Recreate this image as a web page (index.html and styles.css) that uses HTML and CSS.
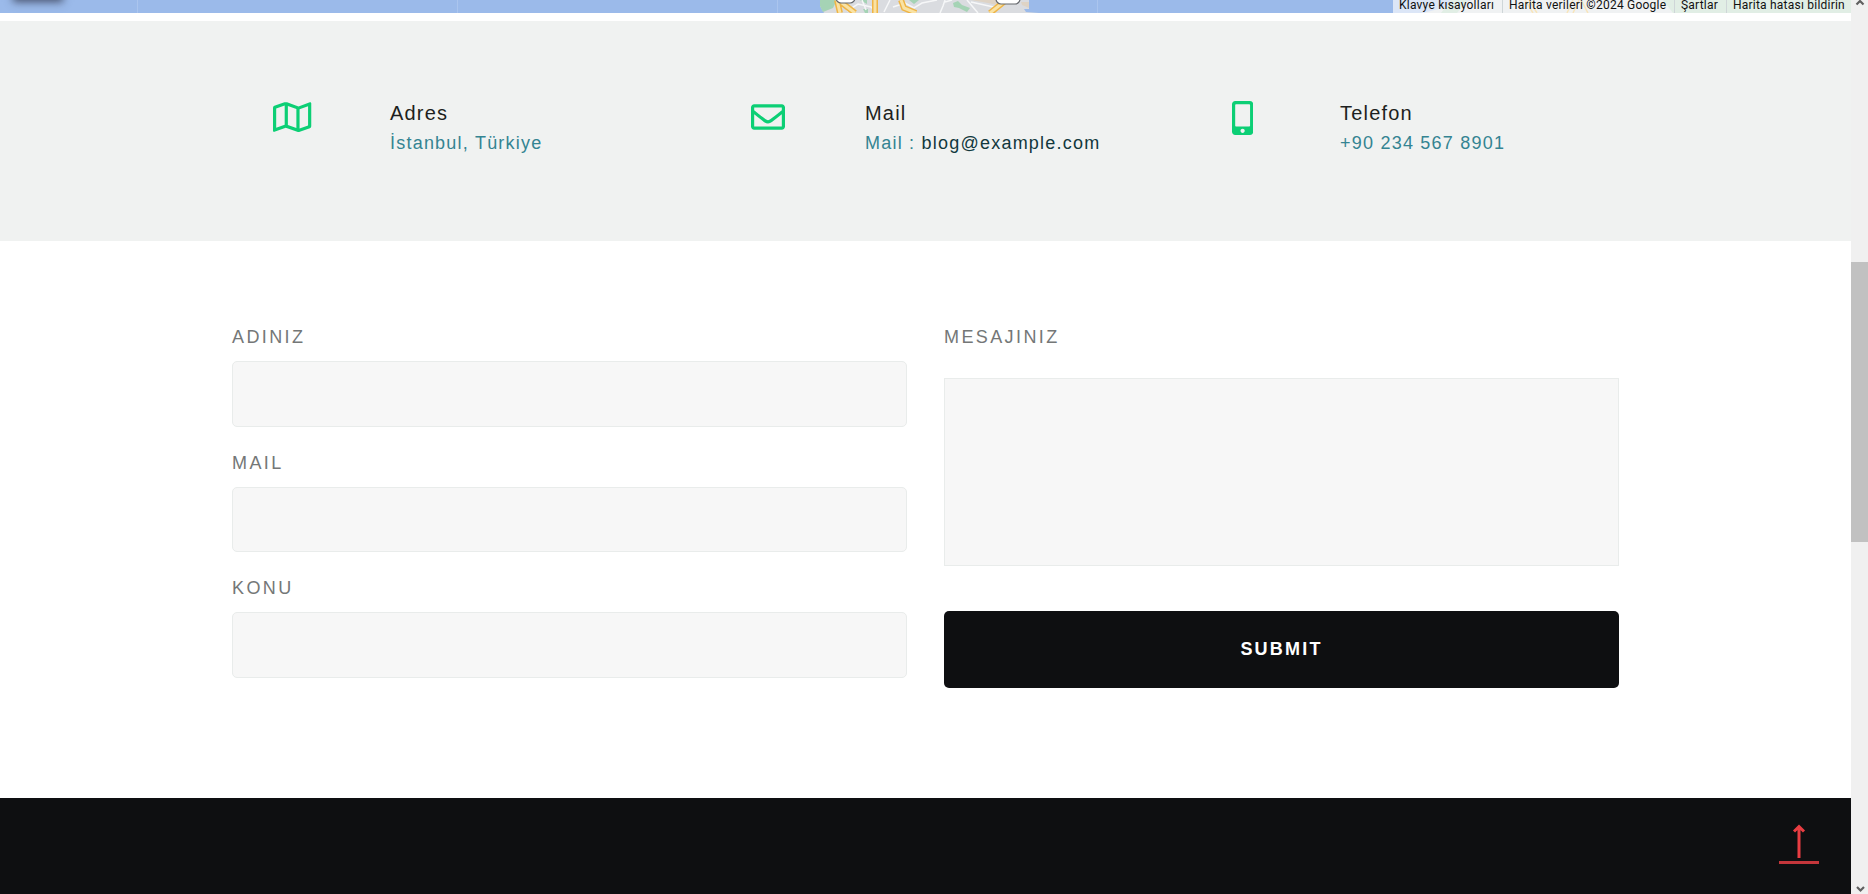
FILE: index.html
```html
<!DOCTYPE html>
<html lang="tr">
<head>
<meta charset="utf-8">
<title>İletişim</title>
<link rel="stylesheet" href="styles.css">
</head>
<body>
<div class="page">
  <section class="map">
    <svg class="map-art" width="1851" height="13" viewBox="0 0 1851 13">
      <path class="tile" d="M137.5 0V13M457.500 0V13M777.500 0V13M1097.500 0V13"/>
      <path class="land" d="M820 0H1029V9L1024 9 1026 12 1039 13H824L820 6Z"/>
      <path class="park" d="M820 0H837L833 8 823 12 820 6ZM909 0H919L914 4ZM953 3L958 1 962 5 970 8 967 12 959 8 954 7ZM860 0H867V4ZM863 9H868V13H865Z"/>
      <path class="sand" d="M971 0H997V5L988 3ZM1021 2H1029V8L1022 5Z"/>
      <path class="street" d="M847 11L858 4 871 7 876 12M884 12L890 0M893 7L905 3 914 8 922 3 937 0M945 0L943 6 940 13M945 2L952 0M967 0L978 13M971 2L998 8M862 0L866 10"/>
      <path class="road" d="M837 0L840 13M842 3L855 13M875 0V13M901 0L904 8 916 13M1005 1L990 13"/>
      <path class="road-core" d="M837 0L840 13M842 3L855 13M875 0V13M901 0L904 8 916 13M1005 1L990 13"/>
      <rect class="shield" x="836" y="-10" width="19" height="13" rx="5"/>
      <rect class="shield" x="996" y="-10" width="24" height="14" rx="5"/>
    </svg>
    <span class="map-card"></span>
    <div class="credits">
      <svg class="credits-art" width="458" height="13" viewBox="0 0 458 13">
        <path class="tint" d="M0 0H80L30 13H0Z"/>
        <path class="tint-park" d="M48 13L58 0H75L64 13ZM270 0H458V13H280Z"/>
        <path class="tint-road" d="M132 0L140 13M136 0L144 13M180 0L174 13M186 0L180 13M188 0L195 13"/>
      </svg>
      <span>Klavye kısayolları</span><span>Harita verileri ©2024 Google</span><span>Şartlar</span><span>Harita hatası bildirin</span>
    </div>
  </section>

  <section class="info">
    <div class="info-item">
      <div class="info-icon raised"><svg width="38.250" height="34" viewBox="0 0 576 512"><path d="M560.02 32c-1.96 0-3.98.37-5.96 1.16L384.01 96H384L212 35.28A64.252 64.252 0 0 0 191.76 32c-6.69 0-13.37 1.05-19.81 3.14L20.12 87.95A32.006 32.006 0 0 0 0 117.66v346.32C0 473.17 7.53 480 15.99 480c1.96 0 3.97-.37 5.96-1.16L192 416l172 60.71a63.98 63.98 0 0 0 40.05.15l151.83-52.81A31.996 31.996 0 0 0 576 394.34V48.02c0-9.19-7.53-16.02-15.98-16.02zM224 90.42l128 45.19v285.97l-128-45.19V90.42zM48 418.05V129.07l128-44.53v286.2l-.64.23L48 418.05zm480-35.13l-128 44.53V141.26l.64-.24L528 93.95v288.97z"/></svg></div>
      <div><h3>Adres</h3><p>İstanbul, Türkiye</p></div>
    </div>
    <div class="info-item">
      <div class="info-icon raised"><svg width="34" height="34" viewBox="0 0 512 512"><path d="M464 64H48C21.490 64 0 85.490 0 112v288c0 26.510 21.490 48 48 48h416c26.510 0 48-21.490 48-48V112c0-26.510-21.490-48-48-48zm0 48v40.805c-22.422 18.259-58.168 46.651-134.587 106.490-16.841 13.247-50.201 45.072-73.413 44.701-23.208.375-56.579-31.459-73.413-44.701C106.180 199.465 70.425 171.067 48 152.805V112h416zM48 400V214.398c22.914 18.251 55.409 43.862 104.938 82.646 21.857 17.205 60.134 55.186 103.062 54.955 42.717.231 80.509-37.199 103.053-54.947 49.528-38.783 82.032-64.401 104.947-82.653V400H48z"/></svg></div>
      <div><h3>Mail</h3><p>Mail : <a>blog@example.com</a></p></div>
    </div>
    <div class="info-item">
      <div class="info-icon"><svg width="21.250" height="34" viewBox="0 0 320 512"><path d="M272 0H48C21.500 0 0 21.500 0 48v416c0 26.500 21.500 48 48 48h224c26.500 0 48-21.500 48-48V48c0-26.500-21.500-48-48-48zM160 480c-17.700 0-32-14.300-32-32s14.300-32 32-32 32 14.300 32 32-14.300 32-32 32zm112-108c0 6.600-5.400 12-12 12H60c-6.600 0-12-5.400-12-12V60c0-6.600 5.400-12 12-12h200c6.600 0 12 5.400 12 12v312z"/></svg></div>
      <div><h3>Telefon</h3><p>+90 234 567 8901</p></div>
    </div>
  </section>

  <form class="contact">
    <div class="column">
      <label for="name">ADINIZ</label><input id="name" type="text">
      <label for="mail">MAIL</label><input id="mail" type="text">
      <label for="subject">KONU</label><input id="subject" type="text">
    </div>
    <div class="column">
      <label for="message">MESAJINIZ</label><textarea id="message"></textarea>
      <button type="button">SUBMIT</button>
    </div>
  </form>

  <footer class="footer">
    <svg class="to-top" width="42" height="42" viewBox="0 0 42 42"><path d="M21 34V3M16 7.500L21 2.500 26 7.500"/><path class="base" d="M1 38.500H41"/></svg>
  </footer>
</div>
<div class="scrollbar">
  <svg width="17" height="17" viewBox="0 0 17 17"><path d="M5.500 4.500L9 1 12.500 4.500"/></svg>
  <div class="thumb"></div>
  <svg width="17" height="17" viewBox="0 0 17 17"><path d="M6 10L9.500 13.500 13 10"/></svg>
</div>
</body>
</html>
```

FILE: styles.css
```css
* { box-sizing: border-box; }

body {
  margin: 0;
  height: 894px;
  display: flex;
  overflow: hidden;
  background: #fff;
  font-family: "Liberation Sans", Arial, sans-serif;
}

.page { width: 1851px; height: 894px; display: flex; flex-direction: column; }

.map {
  position: relative;
  height: 13px;
  margin-bottom: 8px;
  overflow: hidden;
  background: #9bbaea;
}
.map-art { display: block; }
.map-art path { fill: none; }
.map-art .tile { stroke: #abc5ee; }
.map-art .land { fill: #dadce0; }
.map-art .park { fill: #a5d3b5; }
.map-art .sand { fill: #ded3c5; }
.map-art .street { stroke: #f6f7f8; stroke-width: 1.500px; }
.map-art .road { stroke: #efb546; stroke-width: 6px; }
.map-art .road-core { stroke: #f9e2a4; stroke-width: 3px; }
.map-art .shield { fill: #fff; stroke: #65686d; stroke-width: 1.200px; }
.map-card {
  position: absolute;
  left: 14px;
  top: -38px;
  width: 48px;
  height: 38px;
  box-shadow: 0 1px 8px 1px rgba(45, 50, 70, .75);
}
.credits {
  position: absolute;
  top: 0;
  right: 0;
  width: 458px;
  height: 13px;
  background: #f0f2f3;
  color: #111;
  font: 12px/11px Roboto, sans-serif;
  letter-spacing: .22px;
  display: grid;
  grid-template-columns: 109px 172px 52px 1fr;
}
.credits-art { position: absolute; left: 0; top: 0; }
.credits .tint { fill: #dce6f7; }
.credits .tint-park { fill: #e1eee5; }
.credits .tint-road { fill: none; stroke: #f8e5bb; stroke-width: 1.500px; }
.credits span {
  position: relative;
  padding-left: 6px;
  white-space: nowrap;
}
.credits span + span { border-left: 1px solid #cfd6d8; }

.info {
  height: 220px;
  padding: 80px 213px 0;
  background: #f0f2f1;
  display: grid;
  grid-template-columns: repeat(3, 475px);
}
.info-item { display: grid; grid-template-columns: 158px 1fr; margin-left: 19px; }
.info-icon { display: flex; justify-content: center; width: 121px; height: 34px; }
.info-icon.raised { margin-top: -1px; }
.info-icon svg { fill: #0ccf75; }
.info h3 {
  margin: 0;
  font-size: 20px;
  font-weight: 400;
  line-height: 24px;
  letter-spacing: 1.200px;
  color: #1d1f20;
}
.info p {
  margin: 4px 0 0;
  font-size: 18px;
  line-height: 28px;
  letter-spacing: 1.220px;
  color: #348492;
}
.info a { color: #12383d; }

.contact {
  height: 557px;
  padding: 84px 232px 0;
  display: grid;
  grid-template-columns: 675px 675px;
  column-gap: 37px;
}
.column { display: flex; flex-direction: column; }
.column label {
  height: 36px;
  font-size: 18px;
  line-height: 24px;
  letter-spacing: 2.400px;
  color: #747777;
}
.column input,
.column textarea {
  width: 100%;
  flex: none;
  padding: 10px 20px;
  border: 1px solid #e9eceb;
  background: #f7f7f7;
  outline: none;
}
.column input { height: 65.500px; border-radius: 5px; margin-bottom: 24px; }
.column textarea { height: 188px; margin-top: 17px; resize: none; display: block; }
.column button {
  flex: none;
  height: 77px;
  margin-top: 45px;
  border: 0;
  border-radius: 5px;
  background: #0e0f11;
  color: #fff;
  font: bold 18px "Liberation Sans", Arial, sans-serif;
  letter-spacing: 2.200px;
}

.footer {
  height: 96px;
  padding: 26px 31px 0 0;
  background: #0e0f11;
  display: flex;
  justify-content: flex-end;
}
.to-top path { fill: none; stroke: #e83d42; stroke-width: 3px; }
.to-top .base { stroke: #c4363b; }

.scrollbar {
  width: 17px;
  height: 894px;
  background: #f0f0f0;
  display: flex;
  flex-direction: column;
}
.scrollbar svg { display: block; }
.scrollbar path { fill: none; stroke: #606060; stroke-width: 2.200px; }
.thumb { height: 280px; margin: 245px 0 335px; background: #c1c1c1; }
```
